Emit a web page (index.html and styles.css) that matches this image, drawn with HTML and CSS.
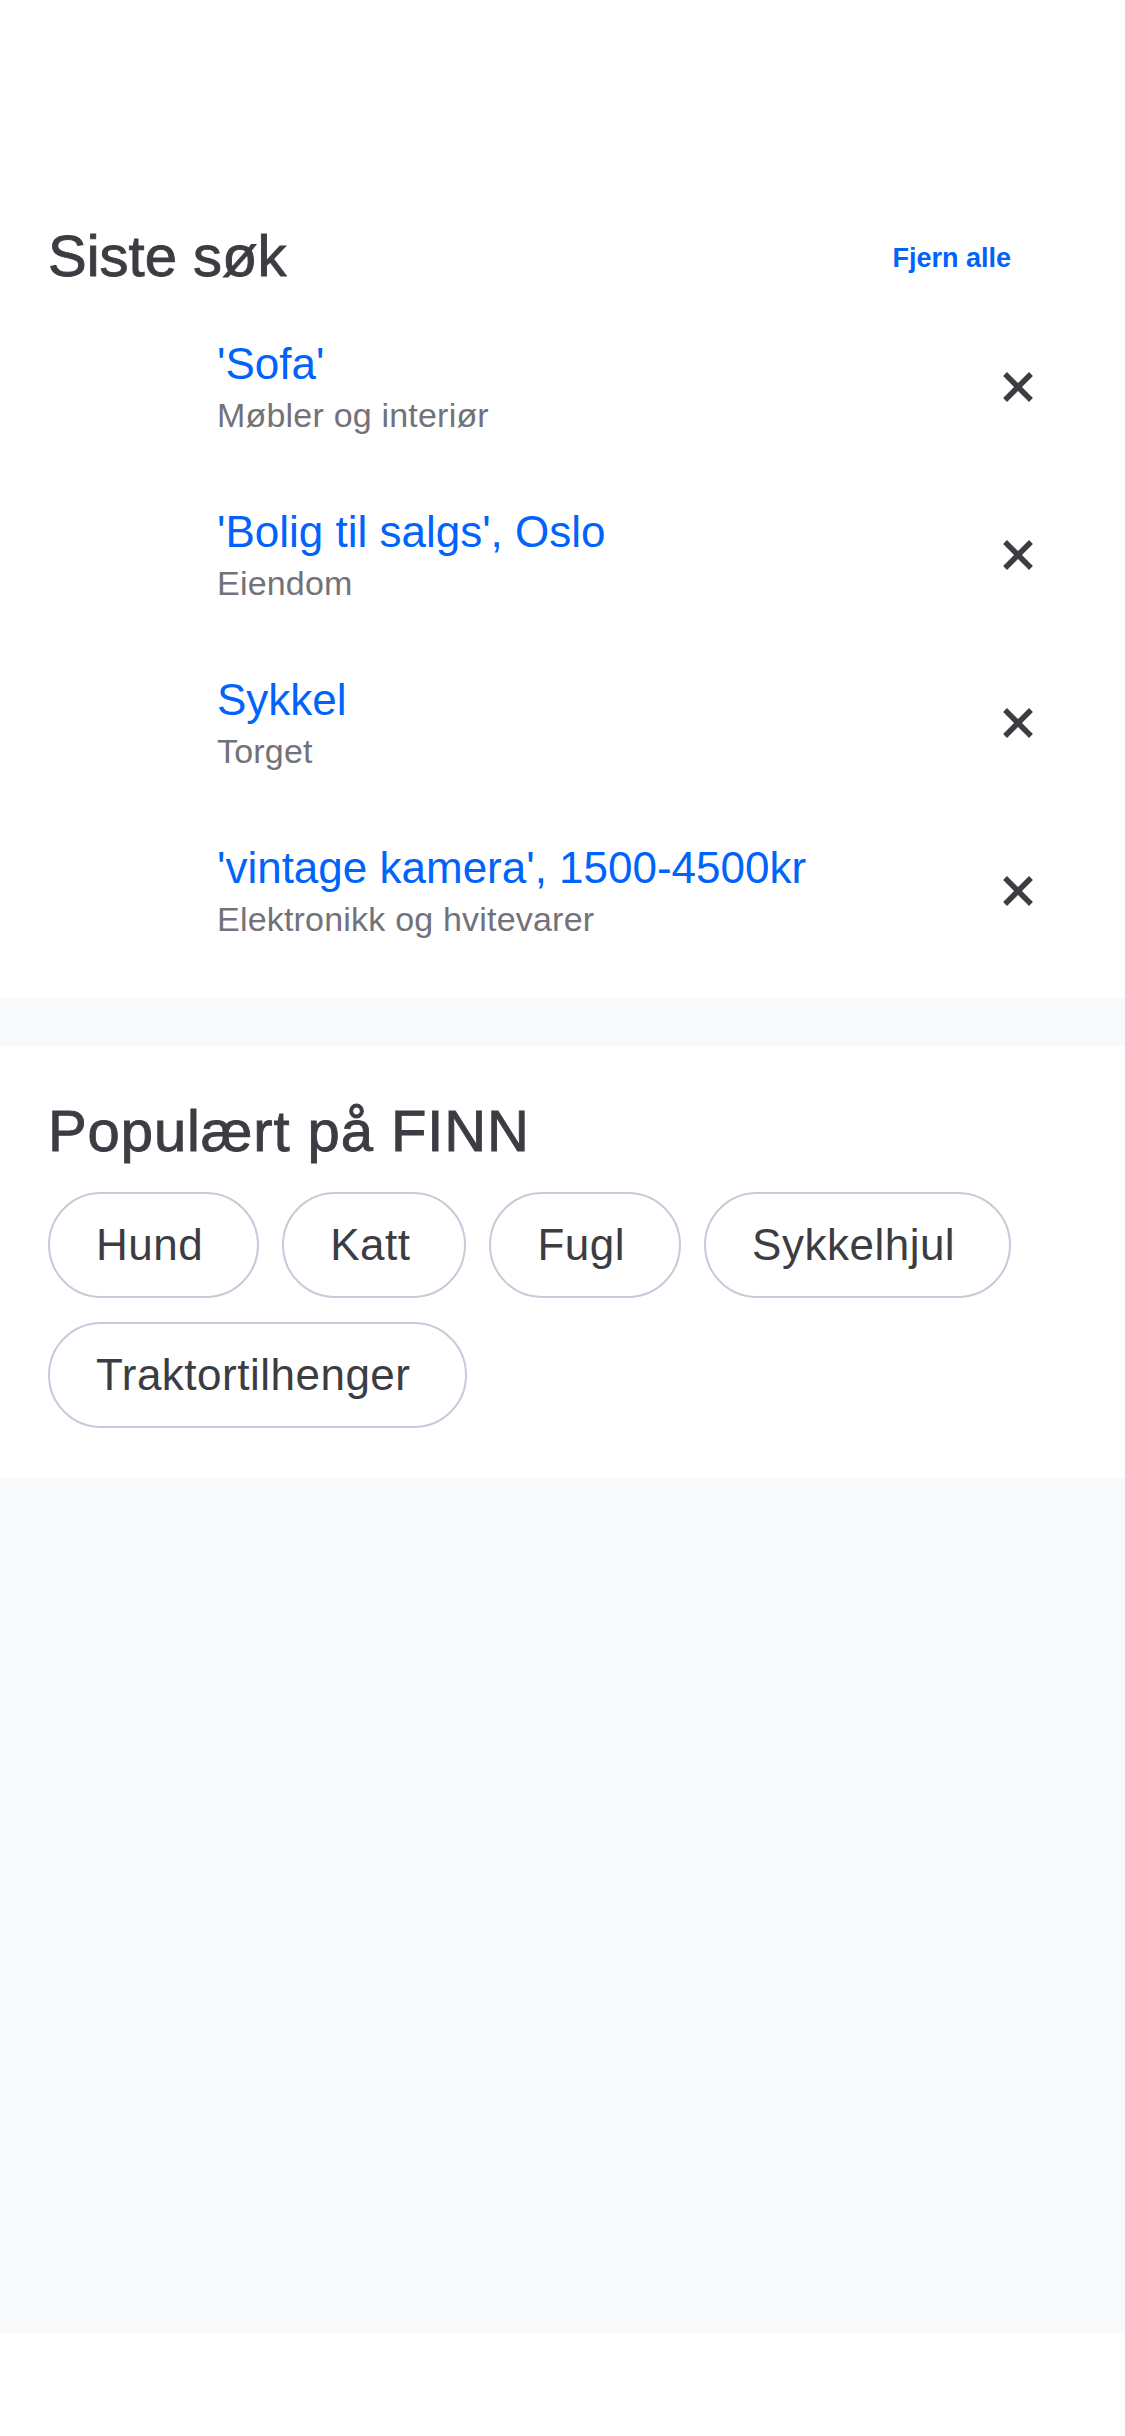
FILE: index.html
```html
<!DOCTYPE html>
<html lang="no">
<head>
<meta charset="utf-8">
<title>Søk</title>
<link rel="stylesheet" href="styles.css">
</head>
<body>
<main class="page">
  <section class="recent">
    <header class="section-head">
      <h2 class="heading">Siste søk</h2>
      <button class="clear-all">Fjern alle</button>
    </header>
    <ul class="search-list">
      <li class="search-row">
        <div class="search-text">
          <div class="search-title">'Sofa'</div>
          <div class="search-sub">Møbler og interiør</div>
        </div>
        <svg class="remove" viewBox="0 0 30 30" aria-hidden="true"><path d="M4 4L26 26M26 4L4 26"/></svg>
      </li>
      <li class="search-row">
        <div class="search-text">
          <div class="search-title">'Bolig til salgs', Oslo</div>
          <div class="search-sub">Eiendom</div>
        </div>
        <svg class="remove" viewBox="0 0 30 30" aria-hidden="true"><path d="M4 4L26 26M26 4L4 26"/></svg>
      </li>
      <li class="search-row">
        <div class="search-text">
          <div class="search-title">Sykkel</div>
          <div class="search-sub">Torget</div>
        </div>
        <svg class="remove" viewBox="0 0 30 30" aria-hidden="true"><path d="M4 4L26 26M26 4L4 26"/></svg>
      </li>
      <li class="search-row">
        <div class="search-text">
          <div class="search-title">'vintage kamera', 1500-4500kr</div>
          <div class="search-sub">Elektronikk og hvitevarer</div>
        </div>
        <svg class="remove" viewBox="0 0 30 30" aria-hidden="true"><path d="M4 4L26 26M26 4L4 26"/></svg>
      </li>
    </ul>
  </section>
  <div class="divider"></div>
  <section class="popular">
    <h2 class="heading heading-wide">Populært på FINN</h2>
    <div class="chips">
      <span class="chip">Hund</span>
      <span class="chip">Katt</span>
      <span class="chip">Fugl</span>
      <span class="chip">Sykkelhjul</span>
      <span class="chip">Traktortilhenger</span>
    </div>
  </section>
  <div class="filler"></div>
</main>
</body>
</html>
```

FILE: styles.css
```css
* { box-sizing: border-box; }

html, body {
  margin: 0;
  padding: 0;
  background: #ffffff;
}

body {
  font-family: "Liberation Sans", Arial, sans-serif;
  color: #3c3c43;
  width: 1125px;
}

.page {
  display: flex;
  flex-direction: column;
}

.recent {
  padding: 224px 48px 23px 48px;
  background: #ffffff;
}

.section-head {
  display: flex;
  justify-content: space-between;
  align-items: center;
}

.heading {
  margin: 0;
  font-size: 58px;
  line-height: 64px;
  font-weight: 400;
  color: #3c3c43;
  -webkit-text-stroke: 0.9px #3c3c43;
}

.heading-wide {
  letter-spacing: 0.9px;
}

.clear-all {
  border: 0;
  background: none;
  padding: 0;
  margin: 0 66px 0 0;
  font-family: inherit;
  font-size: 27px;
  line-height: 32px;
  font-weight: 700;
  color: #0063fb;
  position: relative;
  top: 2px;
}

.search-list {
  list-style: none;
  margin: 15px 0 0 0;
  padding: 0;
}

.search-row {
  display: flex;
  align-items: center;
  height: 168px;
  padding-left: 169px;
}

.search-text {
  flex: 1;
  padding-top: 5px;
}

.search-title {
  font-size: 44px;
  line-height: 50px;
  color: #0063fb;
}

.search-sub {
  font-size: 34px;
  line-height: 52px;
  color: #727279;
  letter-spacing: 0.2px;
}

.remove {
  width: 30px;
  height: 30px;
  margin-right: 44px;
  fill: none;
  stroke: #3c3c43;
  stroke-width: 5.5;
  stroke-linecap: square;
}

.divider {
  height: 48px;
  background: #f8f9fb;
}

.popular {
  padding: 53px 48px 50px 48px;
  background: #ffffff;
}

.chips {
  display: flex;
  flex-wrap: wrap;
  gap: 24px 23px;
  margin-top: 29px;
  width: 980px;
}

.chip {
  display: inline-flex;
  align-items: center;
  height: 106px;
  padding: 0 54px 0 46px;
  border: 2.5px solid #c3ccd9;
  border-radius: 53px;
  font-size: 44px;
  letter-spacing: 0.5px;
  color: #3c3c43;
}

.filler {
  height: 855px;
  background: #f8f9fb;
}
```
